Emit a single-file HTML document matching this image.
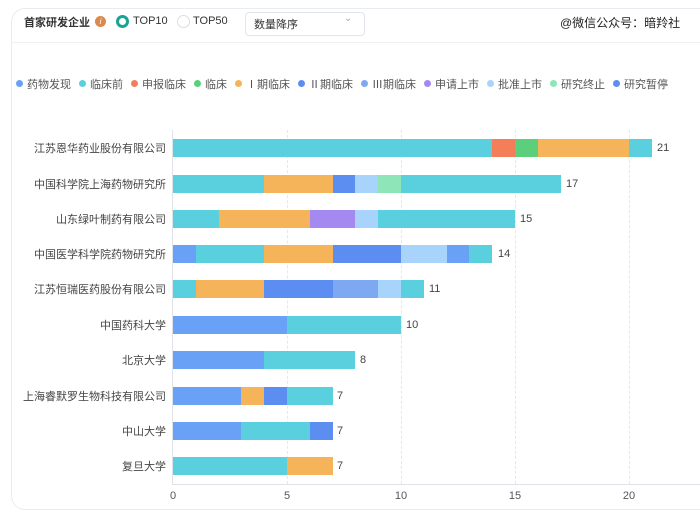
<!DOCTYPE html>
<html><head><meta charset="utf-8"><style>
body{margin:0;width:700px;height:513px;background:#fff;position:relative;overflow:hidden;font-family:"Liberation Sans","Noto Sans CJK SC",sans-serif;}
.card{position:absolute;left:11px;top:8px;width:700px;height:500px;border:1px solid #e8ecf0;border-radius:14px;}
.abs{position:absolute;white-space:nowrap}
.lab{position:absolute;right:534px;font-size:11px;color:#444;transform:translateY(-50%)}
.val{position:absolute;font-size:11px;color:#444;transform:translateY(-50%)}
.bar{position:absolute;height:18px}
.grid{position:absolute;top:130px;height:354px;border-left:1px dashed #e4e7ec}
.leg{position:absolute;top:76px;font-size:11px;color:#555;white-space:nowrap}
.leg i{display:inline-block;width:7px;height:7px;border-radius:50%;margin-right:4px;vertical-align:1px}
.leg span{margin-right:8px}
.tick{position:absolute;font-size:11px;color:#555;top:490px;transform:translateX(-50%)}
</style></head><body>
<div class="card"></div>
<div class="abs" style="left:11px;top:42px;width:690px;border-top:1px solid #eef0f3"></div>
<div class="abs" style="left:24px;top:14px;font-size:11px;font-weight:bold;color:#333">首家研发企业</div>
<div class="abs" style="left:95px;top:16px;width:11px;height:11px;border-radius:50%;background:#d98a4e;color:#fff;font-size:8px;text-align:center;line-height:11px;font-style:italic">i</div>
<div class="abs" style="left:116px;top:15px;width:7px;height:7px;border:3px solid #1aa394;border-radius:50%"></div>
<div class="abs" style="left:133px;top:15px;font-size:11px;color:#333">TOP10</div>
<div class="abs" style="left:177px;top:15px;width:11px;height:11px;border:1px solid #ddd;border-radius:50%"></div>
<div class="abs" style="left:193px;top:15px;font-size:11px;color:#333">TOP50</div>
<div class="abs" style="left:245px;top:12px;width:118px;height:22px;border:1px solid #e2e5ea;border-radius:4px"></div>
<div class="abs" style="left:254px;top:16px;font-size:11px;color:#333">数量降序</div>
<div class="abs" style="left:344px;top:13px;font-size:10px;color:#aaa">⌄</div>
<div class="abs" style="left:560px;top:14px;font-size:12px;color:#222">@微信公众号：暗羚社</div>
<div class="leg" style="left:16px">
<span><i style="background:#69a1f7"></i>药物发现</span><span><i style="background:#5ad0df"></i>临床前</span><span><i style="background:#f57e5a"></i>申报临床</span><span><i style="background:#5ccf7c"></i>临床</span><span><i style="background:#f6b45a"></i>Ⅰ期临床</span><span><i style="background:#5b8ef0"></i>Ⅱ期临床</span><span><i style="background:#7fa8f2"></i>Ⅲ期临床</span><span><i style="background:#a48af0"></i>申请上市</span><span><i style="background:#a8d3fb"></i>批准上市</span><span><i style="background:#8ee6b8"></i>研究终止</span><span><i style="background:#5b8ef0"></i>研究暂停</span>
</div>
<div class="grid" style="left:287px"></div><div class="grid" style="left:401px"></div><div class="grid" style="left:515px"></div><div class="grid" style="left:629px"></div>
<div class="abs" style="left:172px;top:130px;height:354px;border-left:1px solid #dfe3e8"></div>
<div class="abs" style="left:172px;top:484px;width:528px;border-top:1px solid #dfe3e8"></div>
<div class="tick" style="left:173px">0</div><div class="tick" style="left:287px">5</div><div class="tick" style="left:401px">10</div><div class="tick" style="left:515px">15</div><div class="tick" style="left:629px">20</div>
<div id="bars"></div>
<div class="lab" style="top:148px">江苏恩华药业股份有限公司</div>
<div class="lab" style="top:184px">中国科学院上海药物研究所</div>
<div class="lab" style="top:219px">山东绿叶制药有限公司</div>
<div class="lab" style="top:254px">中国医学科学院药物研究所</div>
<div class="lab" style="top:289px">江苏恒瑞医药股份有限公司</div>
<div class="lab" style="top:325px">中国药科大学</div>
<div class="lab" style="top:360px">北京大学</div>
<div class="lab" style="top:396px">上海睿默罗生物科技有限公司</div>
<div class="lab" style="top:431px">中山大学</div>
<div class="lab" style="top:466px">复旦大学</div>
<div class="val" style="left:657px;top:148px">21</div>
<div class="val" style="left:566px;top:184px">17</div>
<div class="val" style="left:520px;top:219px">15</div>
<div class="val" style="left:498px;top:254px">14</div>
<div class="val" style="left:429px;top:289px">11</div>
<div class="val" style="left:406px;top:325px">10</div>
<div class="val" style="left:360px;top:360px">8</div>
<div class="val" style="left:337px;top:396px">7</div>
<div class="val" style="left:337px;top:431px">7</div>
<div class="val" style="left:337px;top:466px">7</div>
<script>
var C={d:"#69a1f7",q:"#5ad0df",s:"#f57e5a",l:"#5ccf7c",a:"#f6b45a",b:"#5b8ef0",c:"#7fa8f2",r:"#a48af0",p:"#a8d3fb",z:"#8ee6b8"};
var rows=[[148,[["q",14],["s",1],["l",1],["a",4],["q",1]]],
[184,[["q",4],["a",3],["b",1],["p",1],["z",1],["q",7]]],
[219,[["q",2],["a",4],["r",2],["p",1],["q",6]]],
[254,[["d",1],["q",3],["a",3],["b",3],["p",2],["d",1],["q",1]]],
[289,[["q",1],["a",3],["b",3],["c",2],["p",1],["q",1]]],
[325,[["d",5],["q",5]]],[360,[["d",4],["q",4]]],
[396,[["d",3],["a",1],["b",1],["q",2]]],[431,[["d",3],["q",3],["b",1]]],[466,[["q",5],["a",2]]]];
var h="";rows.forEach(function(r){var u=0;r[1].forEach(function(s){var x=173+22.8*u;var w=22.8*s[1];h+='<div class="bar" style="left:'+x+'px;top:'+(r[0]-9)+'px;width:'+w+'px;background:'+C[s[0]]+'"></div>';u+=s[1];});});
document.getElementById("bars").innerHTML=h;
</script>
</body></html>
